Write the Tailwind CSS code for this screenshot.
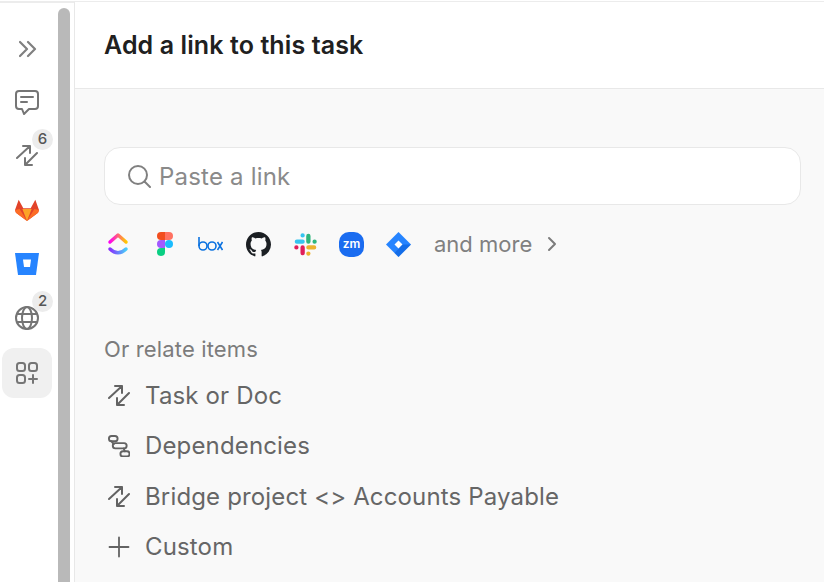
<!DOCTYPE html>
<html lang="en">
  <head>
    <meta charset="UTF-8" />
    <title>Add a link</title>
    <script src="https://cdn.jsdelivr.net/npm/@tailwindcss/browser@4"></script>
  </head>
  <body class="w-[824px] h-[582px] overflow-hidden bg-white font-['Inter',sans-serif]">
    <div class="flex h-[582px] pt-px">
      <div class="h-[581px] border-t-2 border-[#ececec] flex w-[75px] border-r border-r-[#e8e8e8] shrink-0">
        <!-- icon rail -->
        <div class="w-[58px] flex flex-col items-center pl-[2px] pr-[6px] text-[#757575]">
          <div class="h-[54px] w-full flex items-center justify-center mt-[18px] pt-[2px]">
            <svg class="w-[18px] h-[18px] ml-px" viewBox="0 0 18 18" fill="none" stroke="#808080" stroke-width="2.200" stroke-linecap="round" stroke-linejoin="round"><path d="M1 2l7 7-7 7M9 2l7 7-7 7" /></svg>
          </div>
          <div class="h-[54px] w-full flex items-center justify-center">
            <svg class="w-[24px] h-[25px]" viewBox="0 0 24 25" fill="none" stroke="currentColor" stroke-width="2" stroke-linecap="round" stroke-linejoin="round"><path d="M4 1h16a3 3 0 0 1 3 3v12a3 3 0 0 1-3 3h-6l-5 5-2-5H4a3 3 0 0 1-3-3V4a3 3 0 0 1 3-3z" /><path d="M6 7h12M6 12h6" /></svg>
          </div>
          <div class="relative h-[54px] w-full flex items-center justify-center">
            <svg class="w-[22px] h-[22px]" viewBox="0 0 22 22" fill="none" stroke="currentColor" stroke-width="2" stroke-linecap="round" stroke-linejoin="round"><path d="M1 13L14 1M7 1h7v7M21 8L9 20M9 13v7h7" /></svg>
            <span class="absolute left-[30px] top-0 w-[21px] h-[21px] rounded-full bg-[#ececec] text-[15px] font-medium text-[#555] flex items-center justify-center">6</span>
          </div>
          <div class="h-[54px] w-full flex items-center justify-center">
            <svg class="w-[24px] h-[24px]" viewBox="0 0 26 24"><path d="M13 24L1 15l-1-3L4 1l5 9h8l5-9 4 11-1 3z" fill="#e24329" /><path d="M13 24L5 11l-5 1 1 3z" fill="#fc6d26" /><path d="M13 24l8-13 5 1-1 3z" fill="#fc6d26" /><path d="M13 24L8 11h10z" fill="#fca326" /></svg>
          </div>
          <div class="h-[54px] w-full flex items-center justify-center">
            <svg class="w-[24px] h-[22px]" viewBox="0 0 24 22"><path d="M0 0h24l-3 22H3z" fill="#2684ff" /><path d="M8 6.500h8l-1 7.500H9z" fill="#fff" /></svg>
          </div>
          <div class="relative h-[54px] w-full flex items-center justify-center">
            <svg class="w-[24px] h-[24px]" viewBox="0 0 24 24" fill="none" stroke="currentColor" stroke-width="2"><circle cx="12" cy="12" r="11" /><ellipse cx="12" cy="12" rx="5" ry="11" /><path d="M2 8h20M2 16h20" /></svg>
            <span class="absolute left-[30px] top-0 w-[21px] h-[21px] rounded-full bg-[#ececec] text-[15px] font-medium text-[#555] flex items-center justify-center">2</span>
          </div>
          <div class="h-[50px] w-[50px] mt-[3px] rounded-[12px] bg-[#f0f0f0] flex items-center justify-center shrink-0">
            <svg class="w-[22px] h-[22px]" viewBox="0 0 22 22" fill="none" stroke="currentColor" stroke-width="2" stroke-linecap="round" stroke-linejoin="round"><rect x="1" y="1" width="8" height="8" rx="2.500" /><rect x="13" y="1" width="8" height="8" rx="2.500" /><rect x="1" y="13" width="8" height="8" rx="2.500" /><path d="M17 13v8M13 17h8" /></svg>
          </div>
        </div>
        <!-- scrollbar -->
        <div class="w-[12px] mt-[5px] bg-[#b9b9b9] rounded-t-[6px]"></div>
      </div>

      <div class="flex-1 border-t border-[#ececec] flex flex-col">
        <div class="h-[87px] bg-white border-b border-[#e8e8e8] pl-[29px] pt-px flex items-center">
          <h1 class="text-[25px] font-semibold text-[#202020] tracking-[0.1px]">Add a link to this task</h1>
        </div>
        <div class="flex-1 bg-[#f9f9f9] px-[29px] pt-[58px]">
          <div class="h-[58px] w-[697px] rounded-[16px] bg-white border border-[#e8e8e8] flex items-center pl-[22px] gap-[8px]">
            <svg class="w-[24px] h-[24px] text-[#808080]" viewBox="0 0 24 24" fill="none" stroke="currentColor" stroke-width="2" stroke-linecap="round"><circle cx="11" cy="11" r="9" /><path d="M17.500 17.500L23 23" /></svg>
            <span class="text-[24px] pt-[2px] tracking-[0.2px] text-[#8a8a8a]">Paste a link</span>
          </div>

          <div class="flex items-center h-[24px] mt-[27px] pl-[3px]">
            <svg class="w-[22px] h-[24px]" viewBox="0 0 22 24" fill="none" stroke-width="3.500" stroke-linecap="round" stroke-linejoin="round"><defs><linearGradient id="cu1" x1="0" y1="0" x2="1" y2="0"><stop offset="0" stop-color="#ff02f0" /><stop offset="1" stop-color="#ffc800" /></linearGradient><linearGradient id="cu2" x1="0" y1="0" x2="1" y2="0"><stop offset="0" stop-color="#8930fd" /><stop offset="1" stop-color="#49ccf9" /></linearGradient></defs><path d="M3 10l8-7 8 7" stroke="url(#cu1)" /><path d="M3 17c5 5 11 5 16 0" stroke="url(#cu2)" /></svg>
            <svg class="w-[18px] h-[24px] ml-[27px]" viewBox="0 0 16 24"><path d="M0 4a4 4 0 0 1 4-4h4v8H4a4 4 0 0 1-4-4z" fill="#f24e1e" /><path d="M8 0h4a4 4 0 0 1 0 8H8z" fill="#ff7262" /><path d="M0 12a4 4 0 0 1 4-4h4v8H4a4 4 0 0 1-4-4z" fill="#a259ff" /><circle cx="12" cy="12" r="4" fill="#1abcfe" /><path d="M0 20a4 4 0 0 1 4-4h4v4a4 4 0 0 1-8 0z" fill="#0acf83" /></svg>
            <svg class="w-[25px] h-[14px] ml-[24px]" viewBox="0 0 25 14" fill="none" stroke="#0b72e0" stroke-width="1.600"><path d="M1 0v9" /><circle cx="5" cy="9" r="4" /><circle cx="14" cy="9" r="4" /><path d="M19.500 5l5 8M24.500 5l-5 8" /></svg>
            <svg class="w-[25px] h-[25px] ml-[23px]" viewBox="0 0 16 16" fill="#1b1f23"><path fill-rule="evenodd" d="M8 0C3.580 0 0 3.580 0 8c0 3.540 2.290 6.530 5.470 7.590.4.070.55-.17.55-.38 0-.19-.01-.82-.01-1.490-2.010.37-2.530-.49-2.690-.94-.09-.23-.48-.94-.82-1.130-.28-.15-.68-.52-.01-.53.63-.01 1.080.58 1.230.82.720 1.210 1.870.870 2.330.660.070-.52.280-.870.510-1.070-1.780-.2-3.640-.89-3.640-3.950 0-.870.310-1.590.820-2.150-.08-.2-.36-1.020.08-2.120 0 0 .670-.21 2.200.820.640-.18 1.320-.27 2-.27.680 0 1.360.09 2 .27 1.530-1.040 2.200-.820 2.200-.820.440 1.100.160 1.920.080 2.120.510.560.820 1.270.820 2.150 0 3.070-1.870 3.750-3.650 3.950.290.250.540.730.540 1.480 0 1.070-.010 1.930-.010 2.200 0 .210.150.460.550.380A8.013 8.013 0 0 0 16 8c0-4.420-3.580-8-8-8z" /></svg>
            <svg class="w-[23px] h-[23px] ml-[23px]" viewBox="0 0 24 24" fill="none" stroke-width="4.500" stroke-linecap="round"><path d="M9 2.500v0M9 9H3" stroke="#36c5f0" /><path d="M21.500 9v0M15 9V3" stroke="#2eb67d" /><path d="M15 21.500v0M15 15h6" stroke="#ecb22e" /><path d="M2.500 15v0M9 15v6" stroke="#e01e5a" /></svg>
            <div class="w-[25px] h-[25px] ml-[22px] rounded-[10px] bg-[#1a6cf0] text-white text-[12px] font-semibold flex items-center justify-center">zm</div>
            <svg class="w-[25px] h-[25px] ml-[22px]" viewBox="0 0 25 25"><path d="M12.500 0L25 12.500 12.500 25 0 12.500z" fill="#2684ff" /><path d="M12.500 8.500l4 4-4 4-4-4z" fill="#fff" /><path d="M16.500 12.500L25 12.500 12.500 25 8.500 21z" fill="#0052cc" opacity=".45" /></svg>
            <span class="ml-[23px] text-[22px] text-[#808080]">and more</span>
            <svg class="w-[10px] h-[16px] ml-[15px]" viewBox="0 0 10 16" fill="none" stroke="#7c7c7c" stroke-width="2" stroke-linecap="round" stroke-linejoin="round"><path d="M2 2l6 6-6 6" /></svg>
          </div>

          <p class="mt-[78px] text-[22px] leading-[30px] tracking-[0.15px] text-[#7c7c7c]">Or relate items</p>

          <ul class="mt-[7px] text-[24px] tracking-[0.15px] text-[#666666]">
            <li class="h-[50.300px] flex items-center gap-[15px]">
              <svg class="w-[22px] h-[22px] shrink-0 ml-[4px]" viewBox="0 0 22 22" fill="none" stroke="#636363" stroke-width="2" stroke-linecap="round" stroke-linejoin="round"><path d="M1 13L14 1M7 1h7v7M21 8L9 20M9 13v7h7" /></svg>
              Task or Doc
            </li>
            <li class="h-[50.300px] flex items-center gap-[15px]">
              <svg class="w-[22px] h-[22px] shrink-0 ml-[4px]" viewBox="0 0 23 23" fill="none" stroke="#636363" stroke-width="2" stroke-linecap="round"><rect x="1" y="1" width="9" height="5.500" rx="2.700" /><rect x="5" y="8.500" width="14.500" height="5.500" rx="2.700" /><rect x="13" y="17" width="9.500" height="5.500" rx="2.700" /><path d="M3.500 6.500l2.500 3M16.500 14l1 3" /></svg>
              Dependencies
            </li>
            <li class="h-[50.300px] flex items-center gap-[15px]">
              <svg class="w-[22px] h-[22px] shrink-0 ml-[4px]" viewBox="0 0 22 22" fill="none" stroke="#636363" stroke-width="2" stroke-linecap="round" stroke-linejoin="round"><path d="M1 13L14 1M7 1h7v7M21 8L9 20M9 13v7h7" /></svg>
              Bridge project &lt;&gt; Accounts Payable
            </li>
            <li class="h-[50.300px] flex items-center gap-[15px]">
              <svg class="w-[22px] h-[22px] shrink-0 ml-[4px]" viewBox="0 0 22 22" fill="none" stroke="#636363" stroke-width="1.800" stroke-linecap="round"><path d="M11 1.500v19M1.500 11h19" /></svg>
              Custom
            </li>
          </ul>
        </div>
      </div>
    </div>
  </body>
</html>
